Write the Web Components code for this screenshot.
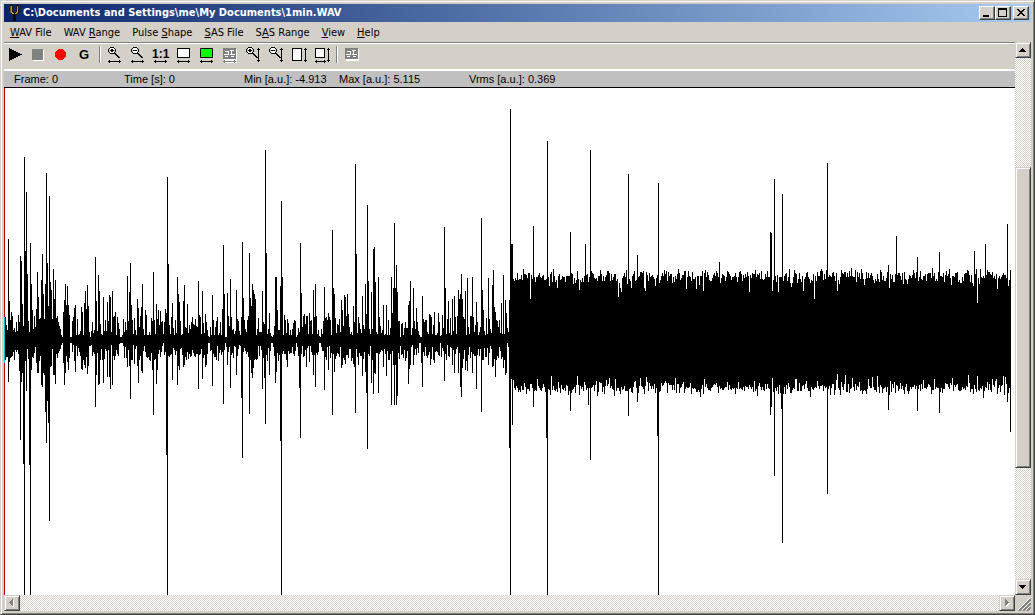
<!DOCTYPE html>
<html lang="en">
<head>
<meta charset="utf-8">
<title>C:\Documents and Settings\me\My Documents\1min.WAV</title>
<style>
html, body { margin: 0; height: 100%; }
body { font: 11px/14px "DejaVu Sans Condensed", "Liberation Sans", sans-serif; color: #000; background: #d4d0c8; overflow: hidden; }
</style>
</head>
<body>
<wave-window></wave-window>
<script>
const make = (name, html, setup) => customElements.define(name, class extends HTMLElement {
  constructor() {
    super();
    const t = document.createElement('template');
    t.innerHTML = html;
    this.attachShadow({ mode: 'open' }).append(t.content.cloneNode(true));
  }
  connectedCallback() { if (setup) setup(this, this.shadowRoot); }
});

const bevel = 'border:1px solid;border-color:#d4d0c8 #404040 #404040 #d4d0c8;box-shadow:inset 1px 1px #fff,inset -1px -1px #808080;background:#d4d0c8;box-sizing:border-box;';

make('title-bar', `
<style>
:host { display: flex; align-items: center; height: 18px; padding: 0 2px 0 3px; background: linear-gradient(90deg, #0a246a, #a6caf0); color: #fff; }
svg { display: block; flex: none; }
h1 { flex: 1; margin: 0; font: bold 11px/16px "DejaVu Sans Condensed", "Noto Sans", sans-serif; white-space: nowrap; overflow: hidden; }
button { width: 16px; height: 14px; padding: 0; border: 1px solid; border-color: #fff #404040 #404040 #fff; box-shadow: inset -1px -1px #808080; background: #d4d0c8; }
.close { margin-left: 2px; }
</style>
<svg width="16" height="16" viewBox="0 0 16 16" shape-rendering="crispEdges"><path d="M3 0h3v7h3V0h3v8l-3 2v6H6v-6L3 8z" fill="#141000"/><path d="M4 1h1v6h1v1h1v7h1V8h1V7h1V1h1v7h-1v1H8v6H7V9H5V8H4z" fill="#c8a020"/><path d="M3 1h1v7H3z" fill="#705808"/></svg>
<h1><slot></slot></h1>
<button aria-label="Minimize"><svg width="14" height="12" shape-rendering="crispEdges"><path d="M3 8h6v2H3z"/></svg></button>
<button aria-label="Maximize"><svg width="14" height="12" shape-rendering="crispEdges"><path fill-rule="evenodd" d="M2 1h9v9H2zM3 3v6h7V3z"/></svg></button>
<button class="close" aria-label="Close"><svg width="14" height="12" shape-rendering="crispEdges"><path d="M3 2h2v1h1v1h2V3h1V2h2v1h-1v1H9v1H8v1h1v1h1v1h1v1H9V8H8V7H6v1H5v1H3V8h1V7h1V6h1V5H5V4H4V3H3z"/></svg></button>
`);

make('menu-bar', `
<style>
:host { display: flex; height: 20px; align-items: center; }
</style>
<slot></slot>`);

make('menu-item', `
<style>
:host { display: block; }
button { display: block; font: inherit; color: inherit; background: none; border: 0; margin: 0; padding: 2px 6px 0; height: 20px; white-space: nowrap; }
</style>
<button><slot></slot></button>`);

const hArrow = (c = '#000', w = 13) => `<path fill="${c}" d="M5 17h${w}v1H5zM6 16h1v3H6zM7 15h1v5H7zM${w + 3} 16h1v3h-1zM${w + 2} 15h1v5h-1z"/>`
  .replace('M7 15h1v5H7z', '').replace(`M${w + 2} 15h1v5h-1z`, '');
const vArrow = x => `<path d="M${x} 4h1v14h-1zM${x - 1} 5h3v1h-3zM${x - 1} 16h3v1h-3z"/>`;
const lens = sign => `<path fill="#fff" d="M7 4h4v5H7z"/><path d="M7 3h4v1H7zM6 4h1v1H6zM11 4h1v1h-1zM5 5h1v3H5zM12 5h1v3h-1zM6 8h1v1H6zM11 8h1v1h-1zM7 9h4v1H7zM11 9h2v1h-2zM12 10h2v1h-2zM13 11h2v1h-2zM14 12h2v1h-2zM15 13h2v1h-2zM7 6h4v1H7z"/>${sign === '+' ? '<path d="M8 5h2v3H8z"/>' : ''}`;
const grid = `<path fill="#fff" d="M6 5h13v12H6z"/><path fill="#808080" d="M5 4h13v11H5z"/><path fill="#fff" d="M7 7h4v1H7zM12 6h4v1h-4zM10 7h1v4h-1zM13 7h1v4h-1zM6 10h5v1H6zM12 10h5v1h-5zM7 12h3v1H7zM13 12h3v1h-3z"/>`;
const icons = {
  play: `<path d="M5 4v13L18 10.5z"/>`,
  stop: `<path fill="#fff" d="M6 6h11v11H6z"/><path fill="#808080" d="M5 5h11v11H5z"/>`,
  record: `<circle cx="10.5" cy="10.5" r="5.5" fill="#f00"/>`,
  gain: `<text x="6" y="15" font-size="13">G</text>`,
  hzoomin: lens('+') + hArrow(),
  hzoomout: lens('-') + hArrow(),
  one: `<text x="3" y="14" font-size="12">1:1</text>` + hArrow(),
  fit: `<path fill="#fff" stroke="#000" d="M5.5 4.5h12v9h-12z"/>` + hArrow(),
  range: `<path fill="#0f0" stroke="#000" d="M5.5 4.5h12v9h-12z"/>` + hArrow(),
  hgrid: grid + `<path fill="#fff" d="M6 18h13v1H6z"/>` + hArrow('#808080'),
  vzoomin: lens('+') + vArrow(17),
  vzoomout: lens('-') + vArrow(17),
  vfit: `<path fill="#fff" stroke="#000" d="M5.5 4.5h9v12h-9z"/>` + vArrow(18),
  full: `<path fill="#fff" stroke="#000" d="M5.5 4.5h9v9h-9z"/>` + hArrow('#000', 11) + vArrow(18),
  grid
};

make('tool-button', `
<style>
:host { display: block; flex: none; width: 23px; }
button { display: block; width: 23px; height: 24px; border: 0; padding: 0; margin: 0; background: none; }
svg { display: block; }
text { font-family: "Liberation Sans", sans-serif; font-weight: bold; }
</style>
<button><svg width="23" height="24" viewBox="0 0 23 24" shape-rendering="crispEdges"></svg></button>`,
(host, root) => {
  root.querySelector('svg').innerHTML = icons[host.getAttribute('icon')];
  const b = root.querySelector('button');
  b.setAttribute('aria-label', host.getAttribute('label'));
  b.disabled = host.hasAttribute('disabled');
});

make('tool-bar', `
<style>
:host { display: flex; height: 27px; box-sizing: border-box; border-top: 1px solid #808080; box-shadow: inset 0 1px #fff; padding-top: 1px; }
::slotted(hr) { flex: none; width: 0; height: 17px; margin: 2px 2px 2px 3px; border: 0; border-left: 1px solid #808080; border-right: 1px solid #fff; box-sizing: content-box; }
</style>
<slot></slot>`);

make('info-bar', `
<style>
:host { display: grid; grid-template-columns: 110px 120px 95px 130px 1fr; height: 19px; box-sizing: border-box; padding-left: 10px; border-top: 2px solid #fff; border-bottom: 1px solid #000; background: #c0c0c0; font: 11px/16px "Liberation Sans", sans-serif; white-space: nowrap; }
</style>
<slot></slot>`);

make('scroll-bar', `
<style>
:host { display: flex; background: repeating-conic-gradient(#d4d0c8 0 25%, #fff 0 50%) 0 0 / 2px 2px; }
:host([axis=y]) { flex-direction: column; }
button { flex: none; width: 16px; height: 16px; padding: 0; ${bevel} }
svg { display: block; }
.track { flex: 1; display: flex; flex-direction: inherit; }
.thumb { display: none; }
:host([axis=y]) .thumb { display: block; flex: 301; ${bevel} }
.before { flex: 109; } .after { flex: 111; }
</style>
<button aria-label="Back"><svg width="14" height="14" shape-rendering="crispEdges"></svg></button>
<div class="track"><div class="before"></div><div class="thumb"></div><div class="after"></div></div>
<button aria-label="Forward"><svg width="14" height="14" shape-rendering="crispEdges"></svg></button>`,
(host, root) => {
  const [a, b] = root.querySelectorAll('svg');
  if (host.getAttribute('axis') === 'y') {
    a.innerHTML = '<path d="M6 5h1v1h1v1h1v1h1v1H3V8h1V7h1V6h1z"/>';
    b.innerHTML = '<path d="M3 5h7v1H9v1H8v1H7v1H6V8H5V7H4V6H3z"/>';
  } else {
    const l = 'M4 6h1V5h1V4h1V3h1v7H7V9H6V8H5V7H4z', r = 'M5 3h1v1h1v1h1v1h1v1H8v1H7v1H6v1H5z';
    a.innerHTML = `<path fill="#fff" transform="translate(1 1)" d="${l}"/><path fill="#808080" d="${l}"/>`;
    b.innerHTML = `<path fill="#fff" transform="translate(1 1)" d="${r}"/><path fill="#808080" d="${r}"/>`;
  }
});

/* Peaks as column, highest sample, lowest sample; 0 means "derive it". */
const peaks = `5 317 0,6 325 0,7 330 357,8 239 382,9 301 362,10 320 358,11 312 357,12 316 356,13 330 352,16 322 352,18 315 354,19 322 371,20 256 440,21 261 382,22 304 373,23 326 464,24 157 595,25 251 361,26 192 391,27 274 349,28 321 359,29 332 465,30 243 595,31 284 370,32 310 357,33 329 358,34 316 353,36 309 363,37 272 373,38 297 373,39 319 361,40 318 356,41 280 385,42 254 387,43 294 373,44 319 375,45 284 412,46 173 443,47 263 401,48 306 423,49 196 521,50 282 367,51 290 366,52 319 349,53 269 375,54 299 375,55 280 384,56 318 354,57 316 358,58 322 353,59 326 351,60 329 349,61 335 345,62 337 343,63 312 363,64 300 385,65 284 373,66 305 356,67 286 362,68 305 370,69 315 358,70 337 343,71 337 343,72 321 352,74 308 361,75 305 372,77 319 356,81 307 369,82 312 370,84 303 365,85 291 368,86 309 357,87 285 374,88 306 366,90 337 346,91 331 345,95 257 407,96 301 375,98 275 385,99 291 384,103 297 383,107 302 377,109 295 377,110 297 389,112 291 385,114 316 360,115 312 356,119 329 344,120 337 343,121 337 343,122 335 343,127 276 367,128 321 350,129 292 366,130 263 399,131 305 360,134 318 364,137 299 366,138 308 383,141 307 371,142 284 373,145 310 352,146 315 357,151 318 353,152 321 370,153 272 415,154 320 360,156 304 384,157 319 370,158 310 354,160 311 357,163 334 343,165 309 352,166 313 455,167 177 595,168 264 356,172 303 380,177 277 385,178 294 366,179 302 370,183 301 367,184 285 365,187 304 352,195 319 357,198 281 389,199 315 355,202 291 379,205 314 367,206 322 365,208 336 343,209 337 343,212 295 386,213 320 354,220 322 350,222 309 352,223 245 404,224 294 350,225 337 343,226 337 347,227 293 365,230 279 388,231 317 355,236 290 375,241 317 398,242 242 458,243 298 352,249 253 414,250 298 360,251 306 373,252 284 378,253 290 368,254 294 360,255 299 359,262 291 389,264 324 378,265 150 424,266 253 355,269 313 375,271 336 343,272 337 343,275 277 383,276 277 372,277 310 353,280 286 441,281 201 595,282 277 354,284 315 354,287 319 367,296 337 343,299 332 388,300 243 438,301 293 354,303 316 357,304 314 356,306 316 367,309 313 362,313 290 375,314 317 355,315 284 387,316 316 353,319 336 343,320 337 343,324 287 390,326 317 360,328 313 370,332 230 415,333 288 354,334 294 372,341 300 368,342 310 365,344 295 360,345 297 364,347 294 355,348 314 358,353 306 364,354 322 367,355 164 413,356 254 349,358 317 365,362 296 376,365 284 372,366 314 393,367 205 449,368 281 354,371 292 383,373 249 394,374 247 373,375 282 374,378 277 393,379 317 354,383 305 367,386 305 376,388 320 360,391 277 405,392 313 351,393 288 365,394 223 405,395 288 365,396 265 405,397 292 396,398 321 353,400 337 346,408 305 384,409 301 369,410 281 365,413 288 365,414 321 355,416 308 355,419 335 343,420 337 343,421 337 363,422 296 387,423 319 352,429 314 352,430 315 365,434 312 363,438 313 355,440 336 343,444 227 381,445 288 354,448 301 356,452 299 365,454 296 373,455 317 354,458 290 373,459 299 353,460 294 387,461 274 397,462 299 368,465 291 370,467 278 371,472 277 373,473 317 354,476 302 389,477 322 355,481 218 412,482 290 360,483 310 360,488 278 365,489 319 353,492 285 367,493 270 366,494 307 359,495 312 377,501 303 359,503 275 368,505 300 375,506 313 373,507 328 343,508 332 347,509 300 448,510 109 595,511 244 379,512 244 425,530 299 384,533 226 407,546 279 438,547 141 595,570 232 411,585 244 385,588 282 405,590 150 460,618 297 388,621 292 387,628 174 416,637 255 402,645 291 386,656 278 388,657 275 436,658 183 595,686 289 387,719 262 386,749 292 385,770 232 415,771 233 407,772 291 378,774 179 476,781 277 409,782 194 543,803 291 385,814 299 388,827 163 494,837 291 374,888 265 410,896 236 385,917 257 411,939 252 413,974 251 385,977 303 376,985 244 387,1007 224 402,1010 270 432`;

make('wave-plot', `
<style>
:host { display: block; background: #fff; overflow: hidden; min-height: 0; }
svg { display: block; width: 100%; height: 100%; }
</style>
<svg viewBox="4 88 1011 507" preserveAspectRatio="none" shape-rendering="crispEdges" role="img" aria-label="Waveform"><path class="wave"/><path fill="#c00000" d="M4 88h1v507H4z"/><path fill="#00c8c8" d="M4 317h1v46H4z"/></svg>`,
(host, root) => {
  const known = new Map(peaks.split(',').map(p => { const [x, a, b] = p.split(' ').map(Number); return [x, [a, b]]; }));
  let seed = 7;
  const rnd = () => (seed = (seed * 16807) % 2147483647) / 2147483647;
  let d = '';
  for (let x = 5; x < 1011; x++) {
    const r = rnd(), s = rnd(), q = rnd();
    let top, low;
    if (x < 510) { top = Math.round(335 - r * r * 20); low = Math.round(345 + s * 16); }
    else {
      top = Math.round(276 + (r + q - 1) * 9 - (r > .9 ? 4 : 0) + (s > .9 ? 8 : 0));
      low = Math.round(388 + (s + q - 1) * 7 + (r < .12 ? 4 : 0) - (r > .35 && r < .45 ? 8 : 0));
    }
    const k = known.get(x);
    if (k) { top = k[0] || top; low = k[1] || low; }
    d += `M${x} ${top}h1V${low}h-1z`;
  }
  root.querySelector('.wave').setAttribute('d', d);
});

make('size-grip', `
<style>:host { display: block; } svg { display: block; }</style>
<svg width="16" height="16"><path d="M4 16L16 4M8 16l8-8M12 16l4-4" stroke="#808080" stroke-width="2"/><path d="M3 15L15 3M7 15l8-8M11 15l4-4" stroke="#fff"/></svg>`);

make('wave-window', `
<style>
:host { display: flex; flex-direction: column; height: 100vh; box-sizing: border-box; ${bevel} padding: 3px; }
.work { flex: 1; min-height: 0; display: grid; grid-template: minmax(0, 1fr) 16px / minmax(0, 1fr) 16px; }
.view { display: flex; flex-direction: column; min-height: 0; }
wave-plot { flex: 1; }
</style>
<title-bar>C:\\Documents and Settings\\me\\My Documents\\1min.WAV</title-bar>
<menu-bar>
<menu-item><u>W</u>AV File</menu-item><menu-item>WAV <u>R</u>ange</menu-item><menu-item>Pulse <u>S</u>hape</menu-item><menu-item><u>S</u>AS File</menu-item><menu-item>S<u>A</u>S Range</menu-item><menu-item><u>V</u>iew</menu-item><menu-item><u>H</u>elp</menu-item>
</menu-bar>
<div class="work">
  <div class="view">
    <tool-bar>
      <tool-button icon="play" label="Play"></tool-button>
      <tool-button icon="stop" label="Stop" disabled></tool-button>
      <tool-button icon="record" label="Record"></tool-button>
      <tool-button icon="gain" label="G"></tool-button>
      <hr>
      <tool-button icon="hzoomin" label="Zoom in time"></tool-button>
      <tool-button icon="hzoomout" label="Zoom out time"></tool-button>
      <tool-button icon="one" label="1:1"></tool-button>
      <tool-button icon="fit" label="Fit time"></tool-button>
      <tool-button icon="range" label="Fit range"></tool-button>
      <tool-button icon="hgrid" label="Fit pulse" disabled></tool-button>
      <tool-button icon="vzoomin" label="Zoom in amplitude"></tool-button>
      <tool-button icon="vzoomout" label="Zoom out amplitude"></tool-button>
      <tool-button icon="vfit" label="Fit amplitude"></tool-button>
      <tool-button icon="full" label="Fit all"></tool-button>
      <hr>
      <tool-button icon="grid" label="Pulse shape" disabled></tool-button>
    </tool-bar>
    <info-bar><span>Frame: 0</span><span>Time [s]: 0</span><span>Min [a.u.]: -4.913</span><span>Max [a.u.]: 5.115</span><span>Vrms [a.u.]: 0.369</span></info-bar>
    <wave-plot></wave-plot>
  </div>
  <scroll-bar axis="y"></scroll-bar>
  <scroll-bar axis="x"></scroll-bar>
  <size-grip></size-grip>
</div>
`);
</script>
</body>
</html>
